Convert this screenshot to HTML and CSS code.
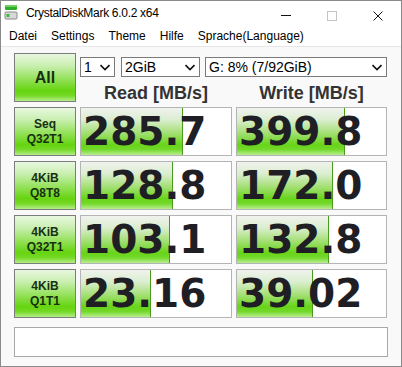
FILE: index.html
```html
<!DOCTYPE html>
<html lang="de">
<head>
    <meta charset="UTF-8">
    <title>CrystalDiskMark 6.0.2 x64</title>
    <link rel="stylesheet" href="styles.css">
</head>
<body>
    <div class="window">
        <div class="titlebar">
            <svg class="app-icon" width="14" height="16" viewBox="0 0 14 16">
                <rect x="1" y="1" width="12" height="5" rx="1" fill="#2fae2a"/>
                <rect x="1" y="1" width="12" height="2" rx="1" fill="#6fd45f"/>
                <rect x="1" y="8" width="12" height="7" rx="1" fill="#d8d8d8" stroke="#8a8a8a" stroke-width="1"/>
                <rect x="2.5" y="10" width="3" height="3" fill="#3dbb37"/>
            </svg>
            <span class="title">CrystalDiskMark 6.0.2 x64</span>
            <div class="controls">
                <span class="ctl">
                    <svg width="10" height="10" viewBox="0 0 10 10"><line x1="0" y1="4.5" x2="10" y2="4.5" stroke="#111" stroke-width="1"/></svg>
                </span>
                <span class="ctl">
                    <svg width="10" height="10" viewBox="0 0 10 10"><rect x="0.5" y="0.5" width="9" height="9" fill="none" stroke="#c4c4c4" stroke-width="1"/></svg>
                </span>
                <span class="ctl">
                    <svg width="10" height="10" viewBox="0 0 10 10"><path d="M0.5 0.5 L9.5 9.5 M9.5 0.5 L0.5 9.5" stroke="#111" stroke-width="1"/></svg>
                </span>
            </div>
        </div>

        <div class="menubar">
            <span>Datei</span>
            <span>Settings</span>
            <span>Theme</span>
            <span>Hilfe</span>
            <span>Sprache(Language)</span>
        </div>

        <div class="client">
            <div class="board">
                <div class="btn btn-all">All</div>
                <div class="top">
                    <div class="combos">
                        <div class="combo combo-count">
                            <span>1</span>
                            <svg width="10" height="7" viewBox="0 0 10 7"><polyline points="0.5,1 5,5.5 9.5,1" fill="none" stroke="#111" stroke-width="1.6"/></svg>
                        </div>
                        <div class="combo combo-size">
                            <span>2GiB</span>
                            <svg width="10" height="7" viewBox="0 0 10 7"><polyline points="0.5,1 5,5.5 9.5,1" fill="none" stroke="#111" stroke-width="1.6"/></svg>
                        </div>
                        <div class="combo combo-drive">
                            <span>G: 8% (7/92GiB)</span>
                            <svg width="10" height="7" viewBox="0 0 10 7"><polyline points="0.5,1 5,5.5 9.5,1" fill="none" stroke="#111" stroke-width="1.6"/></svg>
                        </div>
                    </div>
                    <div class="heads">
                        <div>Read [MB/s]</div>
                        <div>Write [MB/s]</div>
                    </div>
                </div>

                <div class="btn">Seq<br>Q32T1</div>
                <div class="cell"><div class="bar" style="width: 68%"></div><span>285.7</span></div>
                <div class="cell"><div class="bar" style="width: 72.5%"></div><span>399.8</span></div>

                <div class="btn">4KiB<br>Q8T8</div>
                <div class="cell"><div class="bar" style="width: 61.5%"></div><span>128.8</span></div>
                <div class="cell"><div class="bar" style="width: 64.5%"></div><span>172.0</span></div>

                <div class="btn">4KiB<br>Q32T1</div>
                <div class="cell"><div class="bar" style="width: 59.5%"></div><span>103.1</span></div>
                <div class="cell"><div class="bar" style="width: 62%"></div><span>132.8</span></div>

                <div class="btn">4KiB<br>Q1T1</div>
                <div class="cell"><div class="bar" style="width: 46.5%"></div><span>23.16</span></div>
                <div class="cell"><div class="bar" style="width: 51%"></div><span>39.02</span></div>
            </div>
            <div class="comment"></div>
        </div>
    </div>
</body>
</html>
```

FILE: styles.css
```css
body {
    margin: 0;
    font-family: "Liberation Sans", Arial, sans-serif;
    background: #ffffff;
    color: #000;
}
.window {
    width: 402px;
    height: 367px;
    box-sizing: border-box;
    border: 1px solid #8a8a8a;
    background: #ffffff;
    display: flex;
    flex-direction: column;
}
.titlebar {
    height: 27px;
    display: flex;
    align-items: flex-start;
}
.app-icon {
    margin: 3px 0 0 3px;
}
.title {
    margin: 5px 0 0 8px;
    font-size: 12px;
    line-height: 15px;
    letter-spacing: -0.3px;
}
.controls {
    margin-left: auto;
    display: flex;
}
.ctl {
    width: 46px;
    height: 27px;
    display: flex;
    justify-content: center;
    align-items: flex-start;
    padding-top: 10px;
    box-sizing: border-box;
}
.menubar {
    height: 19px;
    box-sizing: border-box;
    padding: 1px 0 0 1px;
    display: flex;
    font-size: 12px;
    line-height: 15px;
    border-bottom: 1px solid #e6e6e6;
}
.menubar span {
    padding: 0 7px;
}
.client {
    flex: 1;
    background: #f9f9f9;
    padding: 6px 13px 0 13px;
}
.board {
    display: grid;
    grid-template-columns: 62px 152px 151px;
    grid-auto-rows: 49px;
    column-gap: 4px;
    row-gap: 5px;
}
.btn {
    box-sizing: border-box;
    border: 1px solid #7c7c7c;
    background: linear-gradient(to bottom, #e9f8e0 0%, #c9efb0 25%, #96e25e 52%, #66d410 78%, #74d824 88%, #b4ee88 100%);
    display: flex;
    align-items: center;
    justify-content: center;
    text-align: center;
    font-weight: bold;
    font-size: 12px;
    line-height: 15px;
    color: #163010;
}
.btn-all {
    font-size: 16px;
}
.top {
    grid-column: 2 / 4;
}
.combos {
    display: flex;
    margin-top: 4px;
    height: 20px;
    gap: 6px;
}
.combo {
    box-sizing: border-box;
    height: 20px;
    border: 1px solid #7a7a7a;
    background: #fff;
    display: flex;
    align-items: center;
    justify-content: space-between;
    padding: 0 4px 0 3px;
    font-size: 14px;
    line-height: 16px;
}
.combo-count {
    width: 35px;
}
.combo-size {
    width: 79px;
}
.combo-drive {
    width: 182px;
    margin-left: -1px;
}
.heads {
    display: grid;
    grid-template-columns: 152px 151px;
    column-gap: 4px;
    margin-top: 5px;
    font-weight: bold;
    font-size: 18px;
    line-height: 22px;
    color: #333;
    text-align: center;
}
.cell {
    position: relative;
    box-sizing: border-box;
    border: 1px solid #b4b4b4;
    background: #fff;
    display: flex;
    align-items: center;
    padding-left: 2px;
}
.cell span {
    position: relative;
    font-family: "DejaVu Sans", sans-serif;
    font-weight: bold;
    font-size: 39px;
    line-height: 47px;
    color: #1e1e24;
}
.bar {
    position: absolute;
    left: 0;
    top: 0;
    bottom: 0;
    box-sizing: border-box;
    border-right: 1px solid #4a9a1e;
    background: linear-gradient(to bottom, #f0f2ee 0%, #dbeed0 25%, #a6e078 52%, #68d41a 78%, #72d828 88%, #b8ee90 100%);
}
.comment {
    margin-top: 9px;
    height: 30px;
    box-sizing: border-box;
    border: 1px solid #a8a8a8;
    background: #fff;
}
```
